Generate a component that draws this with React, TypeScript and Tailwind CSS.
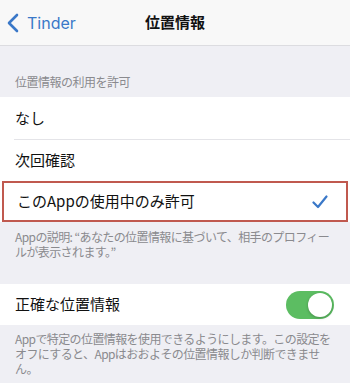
export default function App() {
  const jp = { fontFamily: '"Noto Sans CJK JP", "Noto Sans", sans-serif' };
  return (
    <div className="w-[350px] h-[383px] overflow-hidden bg-[#efeff4]" style={jp}>
      {/* nav bar */}
      <div className="relative h-[46px] bg-[#f8f8f8] border-b border-[#dcdce0] flex items-center">
        <div className="flex items-center pl-[7px] text-[#3a78c8]">
          <svg width="12" height="20" viewBox="0 0 12 20" fill="none">
            <path d="M10 2 L2 10 L10 18" stroke="currentColor" strokeWidth="2.6" strokeLinecap="round" strokeLinejoin="round" />
          </svg>
          <span className="ml-[8px] text-[16px] leading-none" style={{ fontFamily: '"Inter", "Noto Sans", sans-serif' }}>Tinder</span>
        </div>
        <div className="absolute inset-0 flex items-center justify-center pointer-events-none">
          <span className="text-[15px] font-bold text-[#111]">位置情報</span>
        </div>
      </div>

      {/* section header */}
      <div className="h-[51px] flex items-end px-[15px] pb-[6px]">
        <span className="text-[12px] tracking-[-0.5px] text-[#8a8a8e]">位置情報の利用を許可</span>
      </div>

      {/* options */}
      <div className="bg-white">
        <div className="h-[42px] flex items-center px-[15px] text-[15px] text-[#111]">なし</div>
        <div className="ml-[14px] h-px bg-[#e4e4e8]" />
        <div className="h-[41px] flex items-center px-[15px] text-[15px] text-[#111]">次回確認</div>
        <div className="h-[41px] mx-[2px] border-2 border-[#c0594f] flex items-center justify-between pl-[13px] pr-[18px] text-[15px] text-[#111]">
          <span>このAppの使用中のみ許可</span>
          <svg width="16" height="14" viewBox="0 0 16 14" fill="none">
            <path d="M1.5 7.5 L6 12 L14.5 1.5" stroke="#3a78c8" strokeWidth="2.2" strokeLinecap="round" strokeLinejoin="round" />
          </svg>
        </div>
      </div>

      {/* description */}
      <div className="pl-[15px] pr-[10px] pt-[7px] h-[62px] text-[12px] tracking-[-0.6px] leading-[15px] text-[#8a8a8e]">
        Appの説明: “あなたの位置情報に基づいて、相手のプロフィールが表示されます。”
      </div>

      {/* toggle row */}
      <div className="bg-white h-[41px] flex items-center justify-between pl-[15px] pr-[16px] text-[15px] text-[#111]">
        <span>正確な位置情報</span>
        <div className="w-[48px] h-[28px] rounded-full bg-[#5cbd62] flex items-center justify-end p-[2px]">
          <div className="w-[24px] h-[24px] rounded-full bg-white shadow-[0_1px_3px_rgba(0,0,0,0.25)]" />
        </div>
      </div>

      {/* footer */}
      <div className="pl-[15px] pr-[10px] pt-[6px] text-[12px] tracking-[-0.6px] leading-[15px] text-[#8a8a8e]">
        Appで特定の位置情報を使用できるようにします。この設定をオフにすると、Appはおおよその位置情報しか判断できません。
      </div>
    </div>
  );
}
